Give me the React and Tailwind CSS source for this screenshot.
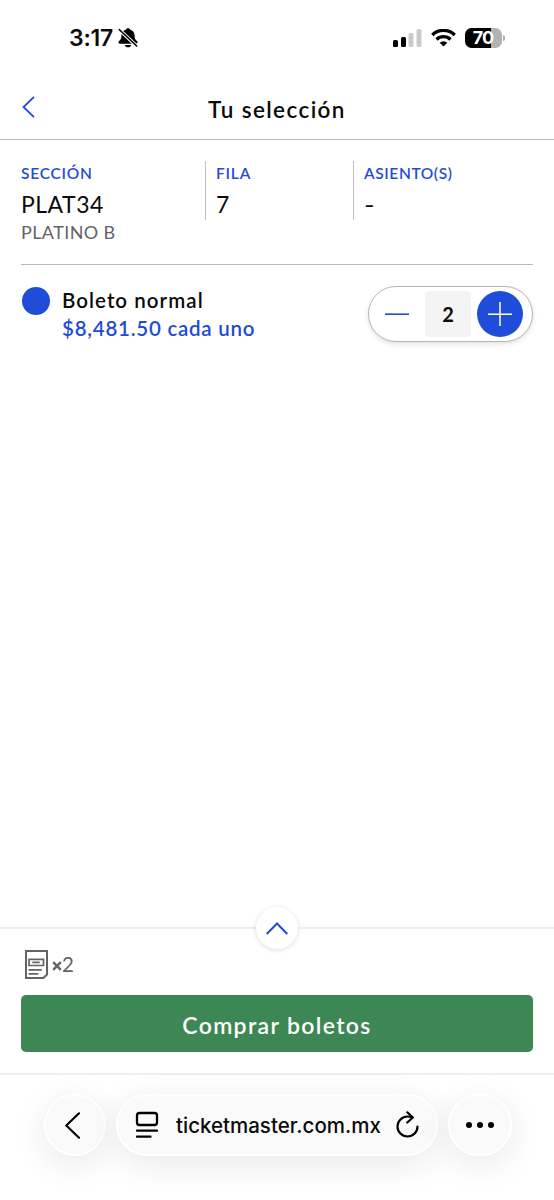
import React, { useState } from "react";

function StatusBar() {
  return (
    <div className="h-[76px] flex items-center justify-between pl-[69px] pr-[49px] font-['Inter',sans-serif]">
      <div className="flex items-center gap-[5px]">
        <span className="text-[23px] leading-[28px] font-semibold tracking-[-0.2px]">3:17</span>
        <svg className="w-[20px] h-[20px]" viewBox="0 0 20 20">
          <path
            d="M10 .2c1.200 0 2 .6 2.300 1.500 2.700.8 4.200 2.700 4.200 5.300 0 3.500.9 4.600 2.200 5.800.5.500.9 1 .9 1.500 0 .9-.7 1.400-1.500 1.400H1.900c-.8 0-1.500-.5-1.500-1.400 0-.5.4-1 .9-1.500C2.600 11.600 3.500 10.500 3.500 7c0-2.600 1.500-4.500 4.200-5.300C8 .8 8.800.2 10 .2z"
            fill="#000"
          />
          <path d="M6.800 16.900h6.400c-.3 1.500-1.600 2.400-3.200 2.400s-2.900-.9-3.200-2.400z" fill="#000" />
          <path d="M.8 1.200 19 18.400" stroke="#fff" strokeWidth="3.500" />
          <path d="M1.200 1.500 18.700 18" stroke="#000" strokeWidth="1.600" strokeLinecap="round" />
        </svg>
      </div>
      <div className="flex items-center">
        <svg className="w-[29px] h-[18px]" viewBox="0 0 29 18">
          <rect x="0" y="11" width="5" height="7" rx="1.500" />
          <rect x="8" y="8" width="5" height="10" rx="1.500" />
          <rect x="15.500" y="4" width="5" height="14" rx="1.500" fill="#cbcbcb" />
          <rect x="23.500" y="0" width="5" height="18" rx="1.500" fill="#cbcbcb" />
        </svg>
        <svg className="ml-[9px] w-[25px] h-[18px]" viewBox="0 0 25 18" fill="none" stroke="#000" strokeWidth="3.300">
          <path d="M1.300 6a16 16 0 0 1 22.400 0" />
          <path d="M5.500 10.500a10 10 0 0 1 14 0" />
          <path d="M12.500 17.600 8.700 13.800a5.400 5.400 0 0 1 7.600 0z" fill="#000" stroke="none" />
        </svg>
        <div className="ml-[9px] w-[37px] h-[20px] rounded-[6.500px] bg-[linear-gradient(90deg,#000_70%,#b3b3b3_70%)] text-white text-[18px] leading-[20px] font-bold text-center tracking-[-1px] pr-px">
          70
        </div>
        <div className="ml-px w-[2px] h-[6px] rounded-r-full bg-[#b3b3b3]" />
      </div>
    </div>
  );
}

function Stepper({ value, onChange }) {
  return (
    <div className="w-[165px] h-[56px] shrink-0 flex items-center justify-between rounded-full border-[1.500px] border-[#b5b5b5] bg-white pl-[4px] pr-[9px] shadow-[0_2px_5px_rgba(0,0,0,0.12)]">
      <button className="w-[46px] h-[46px] flex items-center justify-center" onClick={() => onChange(Math.max(0, value - 1))}>
        <svg className="w-[24px] h-[24px] ml-px" viewBox="0 0 24 24" stroke="#1f4cd6" strokeWidth="1.600">
          <path d="M0 12.200h24" />
        </svg>
      </button>
      <div className="w-[46px] h-[46px] rounded-[4px] bg-[#f4f4f4] flex items-center justify-center text-[20px] font-bold">{value}</div>
      <button className="w-[46px] h-[46px] rounded-full bg-[#1f4cd9] flex items-center justify-center" onClick={() => onChange(value + 1)}>
        <svg className="w-[24px] h-[24px]" viewBox="0 0 24 24" stroke="#fff" strokeWidth="1.500">
          <path d="M0 12.300h24M12 0v24" />
        </svg>
      </button>
    </div>
  );
}

function BrowserBar() {
  const glass = "h-[62px] rounded-full bg-[#fafafa] border-2 border-white shadow-[0_8px_34px_rgba(0,0,0,0.09)] flex items-center";
  return (
    <div className="h-[127px] border-t-2 border-[#efefef] pt-[19px] pl-[44px] flex items-start font-['Inter',sans-serif]">
      <button className={`${glass} w-[62px] justify-center pr-[5px]`}>
        <svg className="w-[15px] h-[27px]" viewBox="0 0 15 27" fill="none" stroke="#000" strokeWidth="2.200" strokeLinecap="round" strokeLinejoin="round">
          <path d="M14 1.300 1.300 13.500 14 25.700" />
        </svg>
      </button>
      <div className={`${glass} ml-[10px] w-[322px] pl-[17px]`}>
        <svg className="w-[24px] h-[28px]" viewBox="0 0 24 28" fill="none" stroke="#000" strokeWidth="2.300" strokeLinecap="round">
          <rect x="2" y="2" width="20" height="12" rx="2.500" />
          <path d="M2 19.700h20M2 25.700h13.500" />
        </svg>
        <span className="ml-[17px] w-[206px] text-[20.500px] whitespace-nowrap font-medium pt-[2px]">ticketmaster.com.mx</span>
        <svg className="ml-[14px] mb-[2px] w-[23px] h-[27px]" viewBox="0 0 23 27" fill="none" stroke="#000" strokeWidth="2.200" strokeLinecap="round" strokeLinejoin="round">
          <path d="M16 6.300c-1.300-.5-2.800-.8-4.500-.8A10 10 0 1 0 21.500 15.500" />
          <path d="M11.300 1.300 16.800 6.500l-5.500 5" />
        </svg>
      </div>
      <button className={`${glass} ml-[10px] w-[64px] justify-center gap-[5px] pb-px`}>
        <span className="w-[6px] h-[6px] rounded-full bg-black" />
        <span className="w-[6px] h-[6px] rounded-full bg-black" />
        <span className="w-[6px] h-[6px] rounded-full bg-black" />
      </button>
    </div>
  );
}

export default function App() {
  const [cantidad, setCantidad] = useState(2);

  return (
    <div className="w-[554px] h-[1200px] flex flex-col overflow-hidden bg-white text-[#0b0b0b] font-['Lato',sans-serif]">
      <StatusBar />
      <header className="h-[64px] grid grid-cols-[60px_1fr_60px] items-center border-b-[1.500px] border-[#bfbfbf]">
        <button className="pl-[22px] pb-px">
          <svg className="w-[13px] h-[22px]" viewBox="0 0 13 22" fill="none" stroke="#1f4cd6" strokeWidth="1.800">
            <path d="M12 .8 1.500 11 12 21.200" />
          </svg>
        </button>
        <h1 className="text-center text-[22.500px] leading-[28px] font-semibold tracking-[1.400px] pt-[4px]">Tu selección</h1>
      </header>

      <section className="mx-[21px] h-[125px] pt-[21px] flex items-start border-b border-[#b9b9b9]">
        <div className="w-[184px]">
          <div className="text-[15.500px] leading-[24px] font-semibold tracking-[0.750px] text-[#1f4cd6]">SECCIÓN</div>
          <div className="text-[23px] leading-[39px] tracking-[0.500px]">PLAT34</div>
          <div className="text-[18px] leading-[16px] tracking-[0.400px] text-[#646464]">PLATINO B</div>
        </div>
        <div className="w-[148px] h-[59px] pl-[10px] border-l-[1.500px] border-[#bfbfbf]">
          <div className="text-[15.500px] leading-[24px] font-semibold tracking-[0.800px] text-[#1f4cd6]">FILA</div>
          <div className="text-[23px] leading-[39px]">7</div>
        </div>
        <div className="h-[59px] pl-[10px] border-l-[1.500px] border-[#bfbfbf]">
          <div className="text-[15.500px] leading-[24px] font-semibold tracking-[0.600px] text-[#1f4cd6]">ASIENTO(S)</div>
          <div className="text-[23px] leading-[39px]">
            <span className="inline-block origin-left scale-x-125">-</span>
          </div>
        </div>
      </section>

      <section className="mx-[21px] pt-[21px] flex items-start">
        <span className="w-[28px] h-[28px] ml-px mt-px rounded-full bg-[#1f4cd9]" />
        <div className="ml-[12px] flex-1 text-[20.500px] leading-[28px] font-semibold">
          <p className="tracking-[1.050px]">Boleto normal</p>
          <p className="tracking-[0.750px] leading-[29px] text-[#1f4cd6]">$8,481.50 cada uno</p>
        </div>
        <Stepper value={cantidad} onChange={setCantidad} />
      </section>

      <footer className="relative mt-auto h-[146px] shrink-0 border-t-2 border-[#efefef] px-[21px] shadow-[0_-2px_6px_rgba(0,0,0,0.02)]">
        <button className="absolute left-1/2 top-[-22px] -translate-x-1/2 w-[42px] h-[42px] rounded-full bg-white shadow-[0_1px_5px_rgba(0,0,0,0.14)] flex items-center justify-center">
          <svg className="w-[22px] h-[13px]" viewBox="0 0 22 13" fill="none" stroke="#1f4cd6" strokeWidth="2">
            <path d="M.7 12 11 1.500 21.300 12" />
          </svg>
        </button>
        <div className="pt-[21px] h-[66px] pl-[4px] flex items-start text-[#646464]">
          <svg className="w-[23px] h-[29px]" viewBox="0 0 23 29" fill="none" stroke="currentColor" strokeWidth="2">
            <path d="M1 1h21v23.500l-3.600 3.500H1z" />
            <path d="M4 9.300h14.500v6.200H4zM7.300 12.400h7.500M3.500 19.800h13.300M3.500 23.800h9.800" strokeWidth="1.700" />
          </svg>
          <span className="ml-[4px] flex items-center leading-[28px]">
            <svg className="w-[10px] h-[10px] mt-[3px]" viewBox="0 0 10 10" stroke="currentColor" strokeWidth="2.400">
              <path d="M1.200 1.200l7.600 7.600M8.800 1.200 1.200 8.800" />
            </svg>
            <span className="text-[20.500px]">{cantidad}</span>
          </span>
        </div>
        <button className="w-full h-[57px] rounded-[5px] bg-[#3d8755] text-white text-[23px] font-semibold tracking-[1.350px] pt-[3px]">
          Comprar boletos
        </button>
      </footer>
      <BrowserBar />
    </div>
  );
}
